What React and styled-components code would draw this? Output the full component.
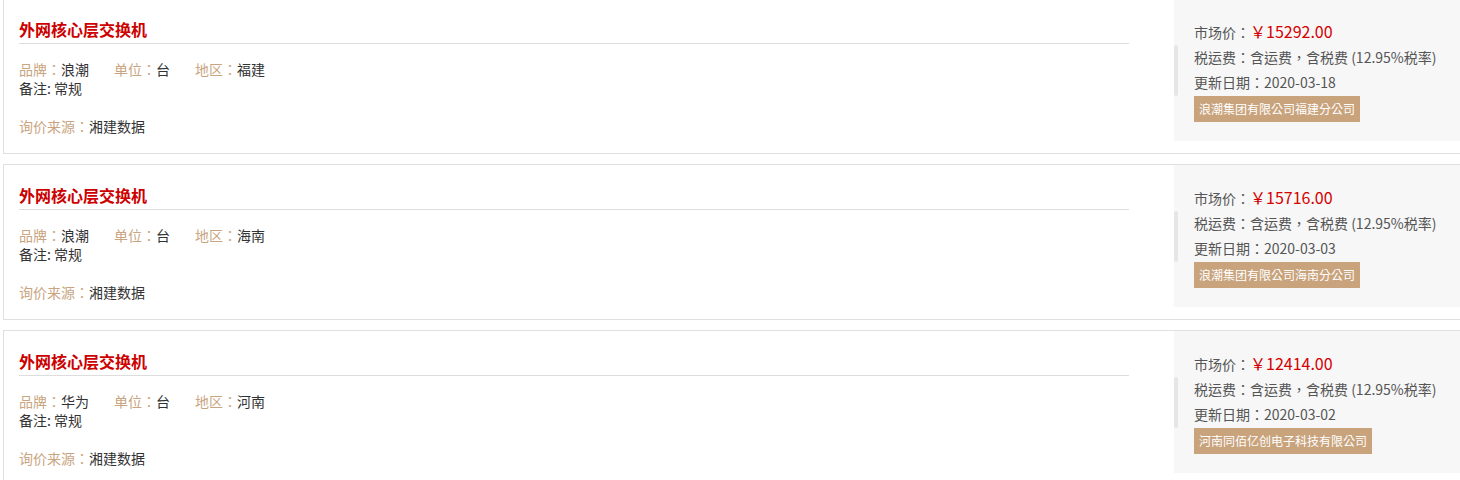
import React from 'react';
import styled, { createGlobalStyle } from 'styled-components';

const GlobalStyle = createGlobalStyle`
    body {
        margin: 0;
        background: #fff;
        overflow: hidden;
        font-family: "Microsoft YaHei", "Noto Sans CJK TC", "Noto Sans CJK SC", "Liberation Sans", sans-serif;
        font-size: 14px;
        color: #333;
    }
`;

const items = [
    { brand: '浪潮', unit: '台', area: '福建', price: '15292.00', date: '2020-03-18', company: '浪潮集团有限公司福建分公司' },
    { brand: '浪潮', unit: '台', area: '海南', price: '15716.00', date: '2020-03-03', company: '浪潮集团有限公司海南分公司' },
    { brand: '华为', unit: '台', area: '河南', price: '12414.00', date: '2020-03-02', company: '河南同佰亿创电子科技有限公司' },
];

const App = () => {
    return (
        <List>
            <GlobalStyle />
            {items.map((item, i) => (
                <Card key={i}>
                    <Main>
                        <Title>外网核心层交换机</Title>
                        <InfoRow>
                            <Field><Label>品牌：</Label>{item.brand}</Field>
                            <Field><Label>单位：</Label>{item.unit}</Field>
                            <Field><Label>地区：</Label>{item.area}</Field>
                        </InfoRow>
                        <Remark>备注: 常规</Remark>
                        <Source><Label>询价来源：</Label>湘建数据</Source>
                    </Main>
                    <Side>
                        <SideLine>市场价：<Price>￥{item.price}</Price></SideLine>
                        <SideLine>税运费：含运费，含税费 (12.95%税率)</SideLine>
                        <SideLine>更新日期：{item.date}</SideLine>
                        <Tag>{item.company}</Tag>
                    </Side>
                </Card>
            ))}
        </List>
    );
};

const List = styled.div`
    display: flex;
    flex-direction: column;
    gap: 10px;
    margin-top: -2px;
`;

const Card = styled.div`
    display: flex;
    align-items: flex-start;
    margin-left: 3px;
    margin-right: -20px;
    border: 1px solid #e0e0e0;
    background: #fff;
`;

const Main = styled.div`
    flex: 1;
    padding: 18px 45px 17px 15px;
`;

const Title = styled.h3`
    margin: 0;
    font-size: 16px;
    line-height: 24px;
    font-weight: bold;
    color: #cc0000;
    padding-bottom: 2px;
    border-bottom: 1px solid #dddddd;
`;

const InfoRow = styled.div`
    display: flex;
    margin-top: 16px;
    line-height: 19px;
`;

const Field = styled.span`
    margin-right: 25px;
    color: #333;
`;

const Label = styled.span`
    color: #c9a57f;
`;

const Remark = styled.div`
    line-height: 19px;
    color: #333;
`;

const Source = styled.div`
    margin-top: 19px;
    line-height: 19px;
    color: #333;
`;

const Side = styled.div`
    position: relative;
    width: 285px;
    height: 102px;
    padding: 20px 0 20px 20px;
    background: #f7f7f7;
    color: #555;

    &::before {
        content: '';
        position: absolute;
        left: 0;
        top: 46px;
        width: 4px;
        height: 51px;
        border-radius: 2px;
        background: #e6e6e6;
    }
`;

const SideLine = styled.div`
    line-height: 25px;
    font-size: 14px;
    white-space: nowrap;
`;

const Price = styled.span`
    color: #d40000;
    font-size: 16px;
`;

const Tag = styled.div`
    display: inline-block;
    margin-top: 1px;
    padding: 0 5px;
    height: 26px;
    line-height: 26px;
    font-size: 12px;
    color: #fff;
    background: #c8a37c;
`;

export default App;
